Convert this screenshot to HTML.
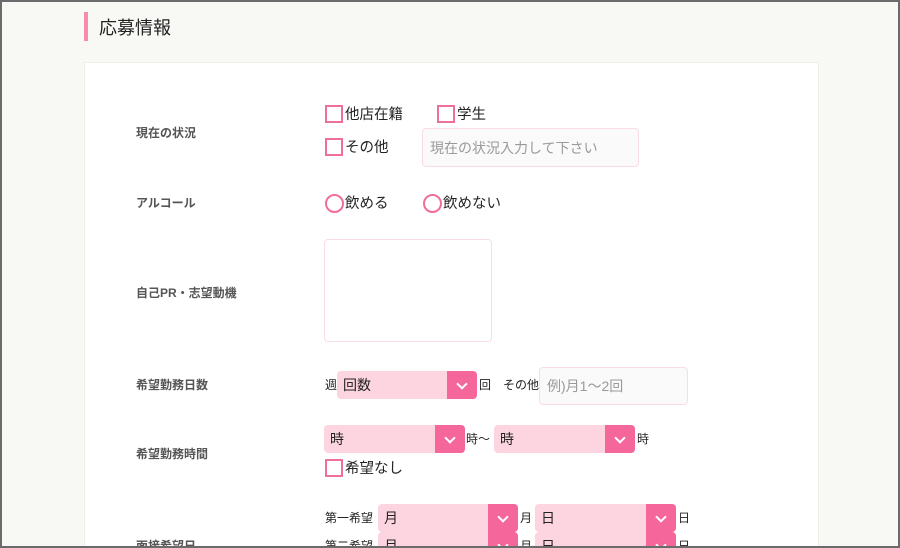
<!DOCTYPE html><html><head><meta charset="utf-8"><style>
*{margin:0;padding:0;box-sizing:border-box}
html,body{width:900px;height:548px;overflow:hidden}
body{background:#f8f9f5;font-family:"Liberation Sans","Noto Sans CJK JP",sans-serif;color:#222;position:relative}
.frame{position:absolute;left:0;top:0;width:900px;height:548px;border:2px solid #6b6b6b;z-index:10;pointer-events:none}
.a{position:absolute;white-space:nowrap}
.lbl{position:absolute;left:136px;font-size:12px;font-weight:bold;color:#555;line-height:14px}
.cb{position:absolute;width:18px;height:18px;border:2px solid #f06e9a;background:#fff}
.rd{position:absolute;width:19px;height:19px;border:2px solid #f06e9a;border-radius:50%;background:#fff}
.t{position:absolute;font-size:14.5px;line-height:18px;top:1px}
.s{font-size:12px;line-height:14px;position:absolute}
.inp{position:absolute;border:1.5px solid #fadce6;background:#fafafa;border-radius:4px;color:#999;font-size:14px;padding-left:7px;display:flex;align-items:center}
.sel{position:absolute;height:28px;background:#fdd5e0;border-radius:4px;font-size:14px;padding-left:6px;line-height:28px;overflow:hidden}
.sel i{position:absolute;right:0;top:0;width:30px;height:28px;background:#f5679a}
.sel i:after{content:"";position:absolute;left:11px;top:9px;width:6px;height:6px;border-right:2.5px solid #fff;border-bottom:2.5px solid #fff;transform:rotate(45deg)}
</style></head><body>
<div class="frame"></div>
<div class="a" style="left:84px;top:12px;width:4px;height:29px;background:#f58cb0"></div>
<div class="a" style="left:99px;top:15px;font-size:18px;line-height:26px;color:#222">応募情報</div>
<div class="a" style="left:84px;top:62px;width:735px;height:486px;background:#fff;border:1px solid #eeeeec;border-bottom:none"></div>

<div class="lbl" style="top:126px">現在の状況</div>
<div class="cb" style="left:325px;top:105px"></div><div class="t" style="left:345px;top:106px">他店在籍</div>
<div class="cb" style="left:437px;top:105px"></div><div class="t" style="left:457px;top:106px">学生</div>
<div class="cb" style="left:325px;top:138px"></div><div class="t" style="left:345px;top:139px">その他</div>
<div class="inp" style="left:422px;top:128px;width:217px;height:39px">現在の状況入力して下さい</div>

<div class="lbl" style="top:196px">アルコール</div>
<div class="rd" style="left:325px;top:194px"></div><div class="t" style="left:345px;top:195px">飲める</div>
<div class="rd" style="left:423px;top:194px"></div><div class="t" style="left:443px;top:195px">飲めない</div>

<div class="lbl" style="top:286px">自己PR・志望動機</div>
<div class="a" style="left:324px;top:239px;width:168px;height:103px;border:1.5px solid #fadce6;border-radius:4px;background:#fff"></div>

<div class="lbl" style="top:378px">希望勤務日数</div>
<div class="s" style="left:325px;top:378px">週</div>
<div class="sel" style="left:337px;top:371px;width:140px">回数<i></i></div>
<div class="s" style="left:479px;top:378px">回</div>
<div class="s" style="left:503px;top:378px">その他</div>
<div class="inp" style="left:539px;top:367px;width:149px;height:38px">例)月1〜2回</div>

<div class="lbl" style="top:447px">希望勤務時間</div>
<div class="sel" style="left:324px;top:425px;width:141px">時<i></i></div>
<div class="s" style="left:466px;top:432px">時〜</div>
<div class="sel" style="left:494px;top:425px;width:141px">時<i></i></div>
<div class="s" style="left:637px;top:432px">時</div>
<div class="cb" style="left:325px;top:459px"></div><div class="t" style="left:345px;top:460px">希望なし</div>

<div class="s" style="left:325px;top:511px">第一希望</div>
<div class="sel" style="left:378px;top:504px;width:140px">月<i></i></div>
<div class="s" style="left:520px;top:511px">月</div>
<div class="sel" style="left:535px;top:504px;width:141px">日<i></i></div>
<div class="s" style="left:678px;top:511px">日</div>
<div class="s" style="left:325px;top:539px">第二希望</div>
<div class="sel" style="left:378px;top:532px;width:140px">月<i></i></div>
<div class="s" style="left:520px;top:539px">月</div>
<div class="sel" style="left:535px;top:532px;width:141px">日<i></i></div>
<div class="s" style="left:678px;top:539px">日</div>
<div class="lbl" style="top:539px">面接希望日</div>
</body></html>
